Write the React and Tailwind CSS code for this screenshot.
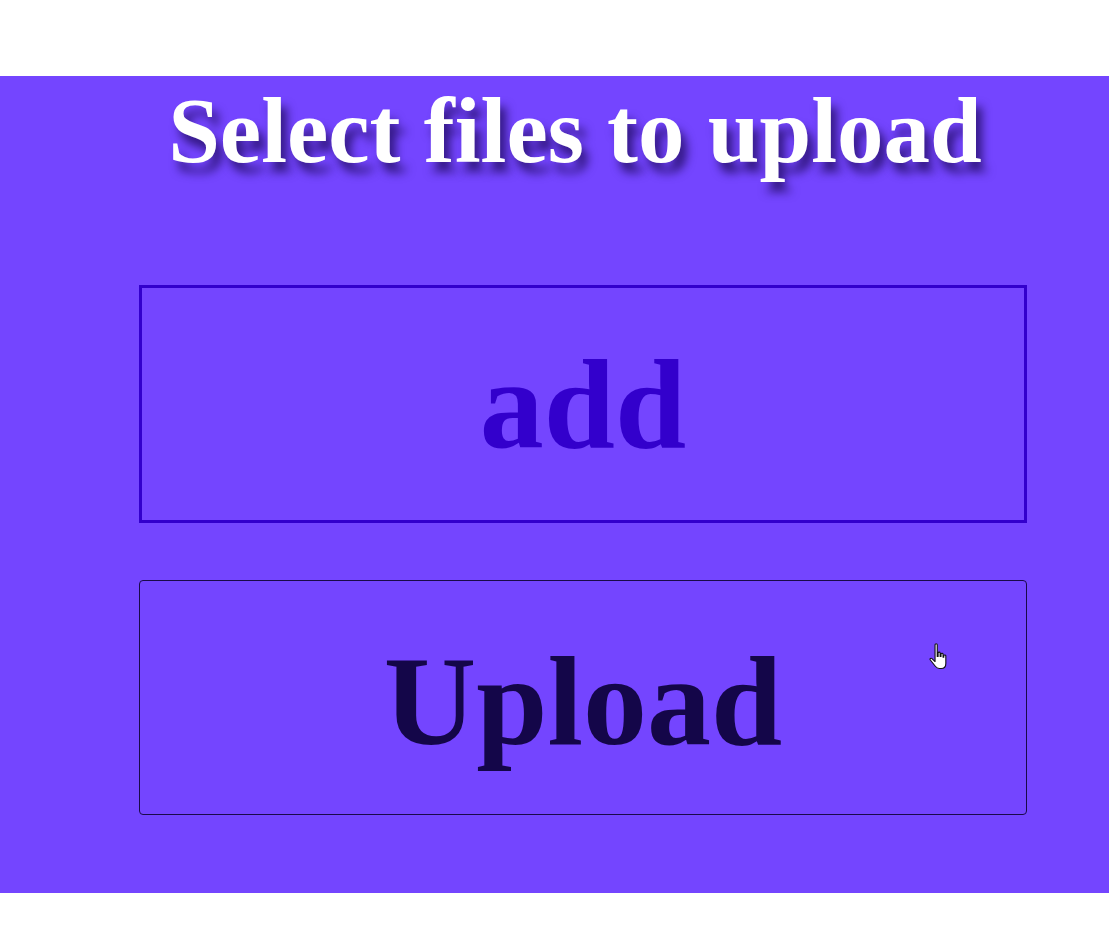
import React from "react";

function HandCursor() {
  return (
    <svg width="19" height="26" viewBox="0.8 1.2 13.4 18.8" className="absolute left-[929px] top-[643px]">
      <path
        d="M5 2.5c0-1 1.6-1 1.6 0V11h0.6V8.5c0-0.9 1.5-0.9 1.5 0V11h0.6V9.3c0-0.9 1.5-0.9 1.5 0V11.5h0.5V10.5c0-0.9 1.5-0.9 1.5 0v5.5c0 2.2-1.3 3.6-3.3 3.6H8c-1.3 0-2-0.6-2.8-1.6L1.6 13.5c-0.6-0.8 0.4-1.7 1.2-1L5 14.6z"
        fill="#fff"
        stroke="#111"
        strokeWidth="0.8"
        strokeLinejoin="round"
      />
    </svg>
  );
}

export default function App() {
  return (
    <div className="relative w-[1109px] h-[951px] bg-white" style={{ fontFamily: '"Liberation Serif", "DejaVu Serif", serif' }}>
      <div className="h-[76px]" />
      <div className="h-[817px] bg-[#7445ff] flex flex-col pl-[139px] pr-[82px]">
        <h1 className="mt-0 pr-[16px] text-center text-white font-bold text-[93px] leading-[110px] [text-shadow:6px_10px_10px_rgba(30,10,90,0.75)]">
          Select files to upload
        </h1>
        <div className="mt-[99px] h-[238px] border-[3px] border-[#3300cc] flex items-center justify-center">
          <span className="text-[#3300cc] font-bold text-[128px] leading-none">add</span>
        </div>
        <div className="mt-[57px] h-[235px] border border-[#1a0a4a] rounded-[4px] flex items-center justify-center">
          <span className="text-[#140649] font-bold text-[128px] leading-none mt-[6px]">Upload</span>
        </div>
      </div>
      <HandCursor />
    </div>
  );
}
